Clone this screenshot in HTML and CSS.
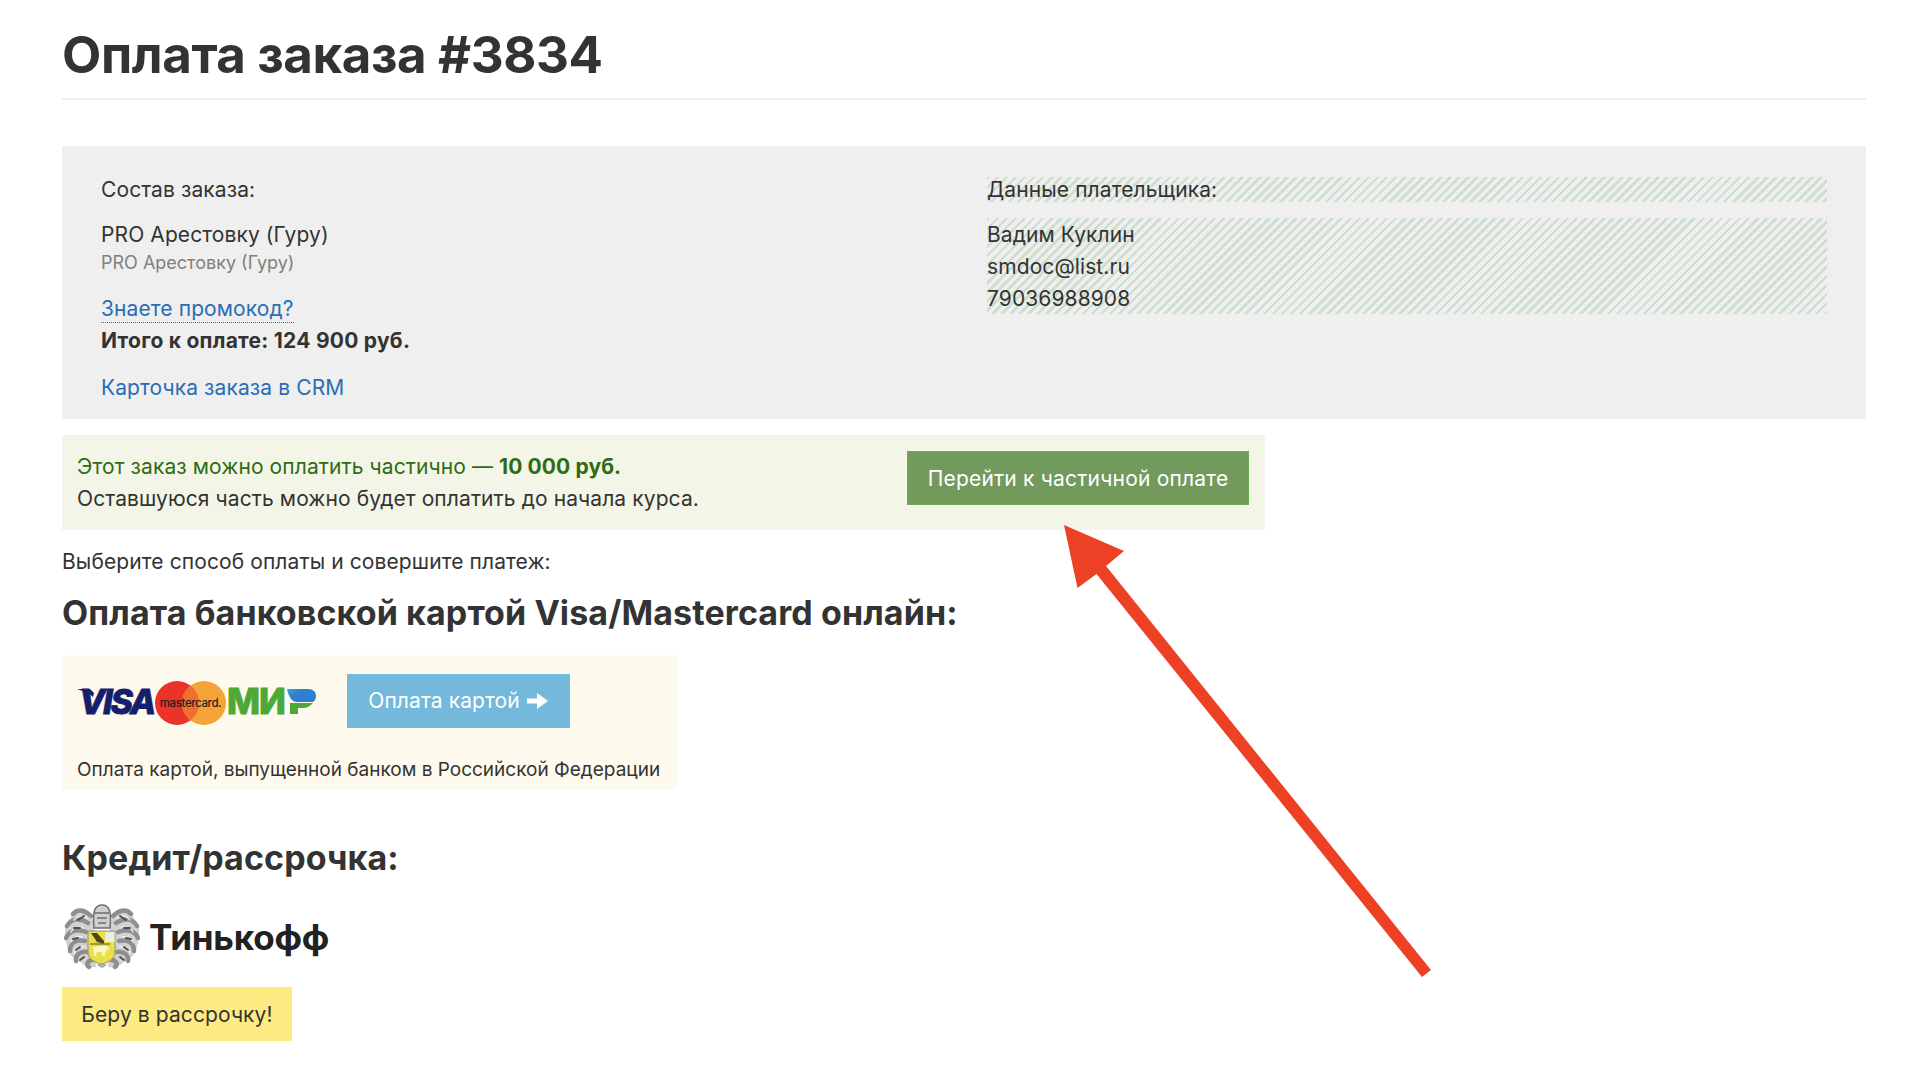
FILE: index.html
```html
<!DOCTYPE html>
<html lang="ru">
<head>
  <meta charset="UTF-8">
  <title>Оплата заказа #3834</title>
  <link rel="stylesheet" href="styles.css">
</head>
<body>
  <h1 class="page-title">Оплата заказа #3834</h1>

  <div class="order-box">
    <div class="order-col">
      <div class="order-label">Состав заказа:</div>
      <div class="order-item">PRO Арестовку (Гуру)</div>
      <div class="order-sub">PRO Арестовку (Гуру)</div>
      <div class="order-promo"><a class="promo-link" href="#">Знаете промокод?</a></div>
      <div class="order-total">Итого к оплате: 124 900 руб.</div>
      <div class="order-crm"><a class="crm-link" href="#">Карточка заказа в CRM</a></div>
    </div>
    <div class="payer-col">
      <div class="payer-label hatched">Данные плательщика:</div>
      <div class="payer-data hatched">
        <div>Вадим Куклин</div>
        <div>smdoc@list.ru</div>
        <div>79036988908</div>
      </div>
    </div>
  </div>

  <div class="partial-box">
    <div class="partial-text">
      <div class="partial-lead">Этот заказ можно оплатить частично — <b>10 000 руб.</b></div>
      <div>Оставшуюся часть можно будет оплатить до начала курса.</div>
    </div>
    <a class="btn btn-green" href="#">Перейти к частичной оплате</a>
  </div>

  <p class="choose">Выберите способ оплаты и совершите платеж:</p>

  <h3 class="pay-title">Оплата банковской картой Visa/Mastercard онлайн:</h3>
  <div class="card-box">
    <div class="card-row">
      <svg class="card-logos" width="240" height="48" viewBox="0 0 240 48">
        <defs>
          <linearGradient id="mirGrad" x1="0" y1="0" x2="1" y2="0.5">
            <stop offset="0" stop-color="#3aa3d8"/>
            <stop offset="0.45" stop-color="#2f7fd0"/>
          </linearGradient>
        </defs>
        <path d="M0 10H13L17 14L16 18C12 14 6 12 0 10Z" fill="#14206e"/>
        <text x="2" y="35" class="logo-visa">VISA</text>
        <circle cx="100" cy="24" r="22" fill="#ea342a"/>
        <circle cx="127" cy="24" r="22" fill="#f4a338"/>
        <path d="M113.5 6.6A22 22 0 0 1 113.500 41.4A22 22 0 0 1 113.5 6.6Z" fill="#ef6f2c"/>
        <text x="113.5" y="28" class="logo-mc" text-anchor="middle">mastercard.</text>
        <text x="150" y="35" class="logo-mir">МИ</text>
        <path d="M210 10H231C236 10 239 13 239 17C239 20 238 21 236 23H220C216 23 212 20 210 10Z" fill="url(#mirGrad)"/>
        <path d="M213 24H236C233 27 230 29 226 29H221V35H213Z" fill="#4ca935"/>
      </svg>
      <a class="btn btn-blue" href="#">Оплата картой <svg class="btn-arrow" width="22" height="18" viewBox="0 0 22 18"><path d="M0 6.5H10V1L21 9L10 17V11.5H0Z" fill="#fff"/></svg></a>
    </div>
    <div class="card-note">Оплата картой, выпущенной банком в Российской Федерации</div>
  </div>

  <h3 class="pay-title credit-title">Кредит/рассрочка:</h3>
  <div class="tinkoff-logo">
    <svg class="tinkoff-crest" width="76" height="66" viewBox="0 0 76 66">
      <defs>
        <g id="crestLeaf">
          <path d="M25 8C18 3 11 5 8 11C5 17 0 20 1 28C0 35 3 40 4 47C7 53 12 56 16 58C20 62 26 64 32 63L30 20Z" fill="#d2d2d2"/>
          <path d="M27 12C20 5 13 5 9 10M24 19C15 13 7 15 3 22M22 28C13 24 5 27 2 34M21 37C12 35 6 39 6 47M23 48C16 47 11 51 12 57M29 56C25 56 21 60 25 63" fill="none" stroke="#8e8e8e" stroke-width="4.500" stroke-linecap="round"/>
          <path d="M23 14C18 11 13 12 10 16M19 24C14 22 9 24 7 28M18 33C13 32 9 34 7 38M20 43C15 42 11 45 10 49" fill="none" stroke="#f2f2f2" stroke-width="1.300" stroke-linecap="round"/>
          <path d="M20 12L14 16M16 24L10 24M14 34L9 35M16 43L12 46M20 53L16 56" stroke="#4f4f4f" stroke-width="2" stroke-linecap="round"/>
        </g>
      </defs>
      <use href="#crestLeaf"/>
      <use href="#crestLeaf" transform="translate(76 0) scale(-1 1)"/>
      <path d="M30 24C28 5 32 1 38 1C44 1 48 5 46 24Z" fill="#cfcfcf" stroke="#6e6e6e" stroke-width="1.500"/>
      <path d="M31 9H45M33 14H43M34 19H42" stroke="#6e6e6e" stroke-width="1.600"/>
      <path d="M33 60C36 65 40 65 43 60Z" fill="#b0b0b0"/>
      <path d="M24 27H51V49C51 55 43 59 37.500 60C32 59 24 55 24 49Z" fill="#ecdf45" stroke="#8f8f8f" stroke-width="1"/>
      <path d="M41 28H50.500V38H41Z" fill="#ececec"/>
      <path d="M27 29L33 29L40 37L40 40L33 38Z" fill="#4b4722"/>
      <path d="M29 43L41 41.500L46 44L42 47L40.500 52H38.500L38 48L33 48L32 52H30Z" fill="#fbf6c8"/>
      <path d="M26 40H46" stroke="#6b6530" stroke-width="1.200"/>
    </svg>
    <span class="tinkoff-name">Тинькофф</span>
  </div>
  <a class="btn btn-yellow" href="#">Беру в рассрочку!</a>

  <svg class="arrow-note" width="1920" height="1072" viewBox="0 0 1920 1072">
    <polygon points="1064,525 1124,551 1106,566 1431,970 1422,977 1096.500,574 1077.500,588" fill="#ec4125"/>
  </svg>
</body>
</html>
```

FILE: styles.css
```css
:root {
  --text: #333333;
  --link: #2a6db5;
  --line: #efefef;
}

body {
  font-family: Inter, "Noto Sans", sans-serif;
  font-size: 21px;
  letter-spacing: 0.1px;
  line-height: 32px;
  margin: 0;
  padding: 0 54px 0 62px;
  color: var(--text);
  background: #fff;
  position: relative;
}

a {
  text-decoration: none;
}

.page-title {
  font-size: 51px;
  font-weight: 700;
  line-height: 60px;
  letter-spacing: -0.4px;
  margin: 0;
  padding: 25px 0 13px;
  border-bottom: 2px solid var(--line);
}

.order-box {
  display: flex;
  background: var(--line);
  margin-top: 46px;
  padding: 28px 39px 16px;
  height: 273px;
  box-sizing: border-box;
}

.order-col {
  width: 886px;
  flex: none;
}

.payer-col {
  flex: 1;
}

.order-item {
  margin-top: 13px;
}

.order-sub {
  font-size: 18px;
  letter-spacing: 0;
  line-height: 24px;
  color: #808080;
}

.order-promo {
  margin-top: 18px;
}

.promo-link {
  color: var(--link);
  border-bottom: 1px dotted var(--link);
  padding-bottom: 1px;
}

.order-total {
  font-weight: 700;
  letter-spacing: 0.25px;
}

.order-crm {
  margin-top: 15px;
}

.crm-link {
  color: var(--link);
}

.hatched {
  background: repeating-linear-gradient(135deg, #cfdfcd 0, #cfdfcd 2.6px, #efefef 2.6px, #efefef 6.4px);
}

.payer-label {
  margin-top: 3px;
  line-height: 26px;
  height: 25px;
}

.payer-data {
  margin-top: 16px;
  padding-top: 1px;
  height: 96px;
  box-sizing: border-box;
}

.partial-box {
  display: flex;
  align-items: flex-start;
  justify-content: space-between;
  width: 1203px;
  box-sizing: border-box;
  margin-top: 16px;
  padding: 16px 16px 15px 15px;
  background: #f3f5e6;
}

.partial-lead {
  color: #2f6b14;
}

.btn {
  display: inline-flex;
  align-items: center;
  justify-content: center;
  box-sizing: border-box;
  color: #fff;
}

.btn-green {
  width: 342px;
  height: 54px;
  padding-top: 1px;
  background: #739a5d;
  border: 1px solid #68b052;
  letter-spacing: 0.2px;
}

.choose {
  margin: 16px 0 0;
}

.pay-title {
  font-size: 34px;
  font-weight: 700;
  line-height: 44px;
  letter-spacing: 0.1px;
  margin: 13px 0 0;
}

.card-box {
  width: 615px;
  box-sizing: border-box;
  margin-top: 20px;
  padding: 19px 15px 4px;
  background: #fefaed;
}

.card-row {
  display: flex;
  align-items: flex-start;
  gap: 30px;
}

.card-logos {
  flex: none;
  margin-top: 5px;
}

.btn-blue {
  width: 223px;
  height: 54px;
  background: #74b9db;
  border: 1px solid #6cc0e8;
  gap: 7px;
}

.btn-arrow {
  flex: none;
}

.card-note {
  font-size: 19px;
  letter-spacing: 0;
  margin-top: 26px;
}

.logo-visa {
  font-family: Inter, sans-serif;
  font-size: 34px;
  font-weight: 800;
  font-style: italic;
  letter-spacing: -2.2px;
  fill: #14206e;
  stroke: #14206e;
  stroke-width: 0.8px;
}

.logo-mc {
  font-family: Inter, sans-serif;
  font-size: 11.5px;
  font-weight: 500;
  letter-spacing: -0.4px;
  fill: #231f20;
}

.logo-mir {
  font-family: Inter, sans-serif;
  font-size: 35px;
  font-weight: 800;
  letter-spacing: -1px;
  fill: #4ca935;
  stroke: #4ca935;
  stroke-width: 0.8px;
}

.credit-title {
  margin-top: 46px;
}

.tinkoff-logo {
  display: flex;
  align-items: center;
  gap: 9px;
  height: 66px;
  margin-top: 24px;
  padding-left: 2px;
}

.tinkoff-crest {
  flex: none;
  filter: blur(0.4px);
}

.tinkoff-name {
  font-size: 35px;
  font-weight: 700;
  letter-spacing: -0.2px;
  color: #222222;
}

.btn-yellow {
  width: 230px;
  height: 54px;
  margin-top: 17px;
  padding-top: 1px;
  background: #fdea82;
  color: var(--text);
}

.arrow-note {
  position: absolute;
  left: 0;
  top: 0;
  pointer-events: none;
}
```
